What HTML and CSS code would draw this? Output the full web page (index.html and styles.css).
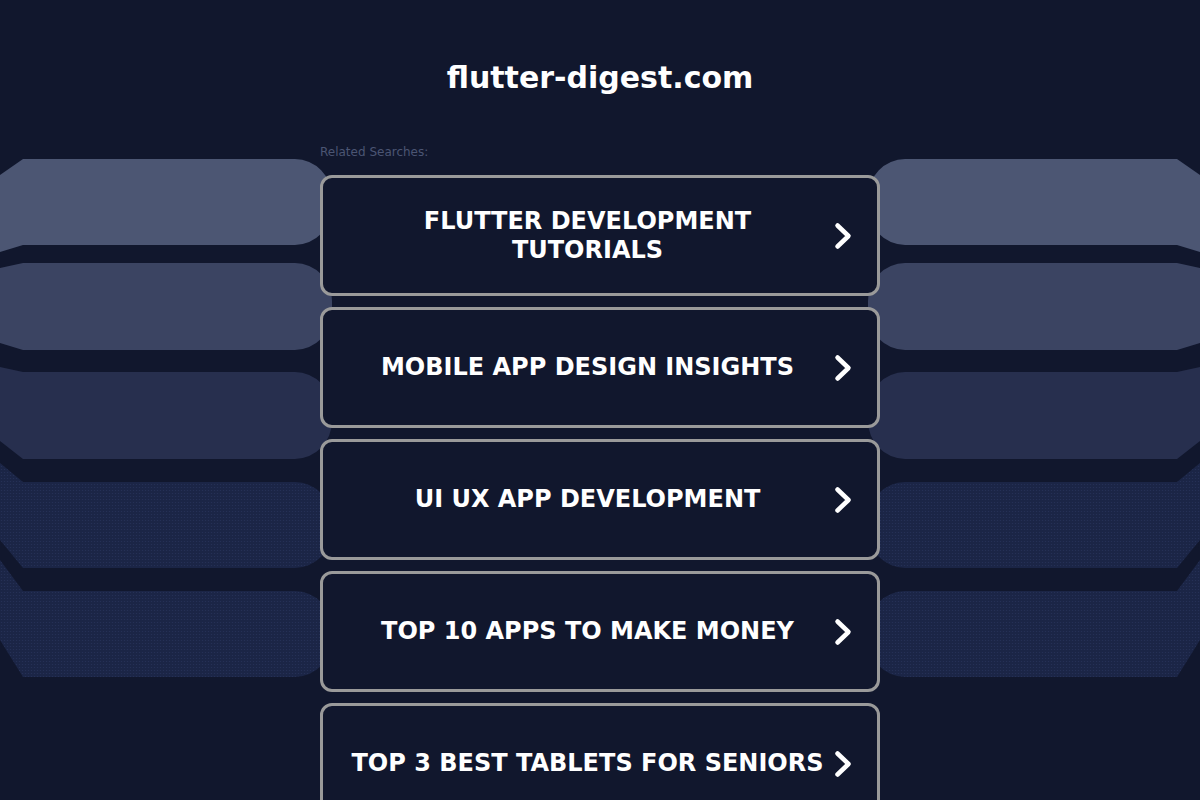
FILE: index.html
```html
<!DOCTYPE html>
<html lang="en">
<head>
<meta charset="utf-8">
<title>flutter-digest.com</title>
<link rel="stylesheet" href="styles.css">
</head>
<body>
<svg class="backdrop" viewBox="0 0 1200 800" preserveAspectRatio="none" aria-hidden="true">
  <defs>
    <pattern id="dots" width="3" height="3" patternUnits="userSpaceOnUse">
      <rect width="3" height="3" fill="#1b2546"/>
      <circle cx="1.5" cy="1.5" r="0.6" fill="#263158"/>
    </pattern>
    <path id="b1" d="M0,175 L23,159 L295,159 A37,38 0 0 1 332,197 L332,207 A37,38 0 0 1 295,245 L23,245 L0,252 Z"/>
    <path id="b2" d="M0,268 L23,263 L295,263 A37,38 0 0 1 332,301 L332,312 A37,38 0 0 1 295,350 L23,350 L0,343 Z"/>
    <path id="b3" d="M0,367 L23,372 L295,372 A37,38 0 0 1 332,410 L332,421 A37,38 0 0 1 295,459 L23,459 L0,441 Z"/>
    <path id="b4" d="M0,463 L23,482 L295,482 A37,38 0 0 1 332,520 L332,530 A37,38 0 0 1 295,568 L23,568 L0,540 Z"/>
    <path id="b5" d="M0,560 L23,591 L295,591 A37,38 0 0 1 332,629 L332,639 A37,38 0 0 1 295,677 L23,677 L0,640 Z"/>
    <g id="bands">
      <use href="#b1" fill="#4c5673"/>
      <use href="#b2" fill="#3b4462"/>
      <use href="#b3" fill="#272f4e"/>
      <use href="#b4" fill="url(#dots)"/>
      <use href="#b5" fill="url(#dots)"/>
    </g>
  </defs>
  <use href="#bands"/>
  <use href="#bands" transform="matrix(-1 0 0 1 1200 0)"/>
</svg>

<main class="page">
  <h1 class="domain">flutter-digest.com</h1>
  <section class="related">
    <p class="related-label">Related Searches:</p>
    <ul class="links">
      <li class="link-item"><a class="link-card" href="#"><span class="link-text">FLUTTER DEVELOPMENT TUTORIALS</span><svg class="chevron" viewBox="0 0 18 28"><path d="M3.5 3.5 L14.5 14 L3.5 24.5"/></svg></a></li>
      <li class="link-item"><a class="link-card" href="#"><span class="link-text">MOBILE APP DESIGN INSIGHTS</span><svg class="chevron" viewBox="0 0 18 28"><path d="M3.5 3.5 L14.5 14 L3.5 24.5"/></svg></a></li>
      <li class="link-item"><a class="link-card" href="#"><span class="link-text">UI UX APP DEVELOPMENT</span><svg class="chevron" viewBox="0 0 18 28"><path d="M3.5 3.5 L14.5 14 L3.5 24.5"/></svg></a></li>
      <li class="link-item"><a class="link-card" href="#"><span class="link-text">TOP 10 APPS TO MAKE MONEY</span><svg class="chevron" viewBox="0 0 18 28"><path d="M3.5 3.5 L14.5 14 L3.5 24.5"/></svg></a></li>
      <li class="link-item"><a class="link-card" href="#"><span class="link-text">TOP 3 BEST TABLETS FOR SENIORS</span><svg class="chevron" viewBox="0 0 18 28"><path d="M3.5 3.5 L14.5 14 L3.5 24.5"/></svg></a></li>
    </ul>
  </section>
</main>
</body>
</html>
```

FILE: styles.css
```css
html, body {
  margin: 0;
  padding: 0;
  height: 100%;
  overflow: hidden;
}

body {
  background: #11172d;
  font-family: "DejaVu Sans", Verdana, sans-serif;
  color: #ffffff;
  position: relative;
}

.backdrop {
  position: absolute;
  top: 0;
  left: 0;
  width: 1200px;
  height: 800px;
  z-index: 0;
}

.page {
  position: relative;
  z-index: 1;
  width: 560px;
  margin: 0 auto;
  padding-top: 59px;
}

.domain {
  margin: 0;
  font-size: 30px;
  line-height: 38px;
  font-weight: bold;
  text-align: center;
  color: #ffffff;
}

.related {
  margin-top: 48px;
}

.related-label {
  margin: 0 0 16px 0;
  font-size: 12px;
  line-height: 14px;
  color: #4b5573;
}

.links {
  list-style: none;
  margin: 0;
  padding: 0;
  display: flex;
  flex-direction: column;
  gap: 11px;
}

.link-card {
  display: flex;
  align-items: center;
  box-sizing: border-box;
  height: 121px;
  padding: 0 25px 0 26px;
  border: 3px solid #9a9a9a;
  border-radius: 12px;
  background: #11172d;
  color: #ffffff;
  text-decoration: none;
}

.link-text {
  flex: 1;
  text-align: center;
  font-size: 24px;
  line-height: 29px;
  font-weight: bold;
}

.chevron {
  flex: none;
  width: 18px;
  height: 28px;
  margin-left: 8px;
}

.chevron path {
  fill: none;
  stroke: #ffffff;
  stroke-width: 4.5;
  stroke-linecap: round;
  stroke-linejoin: round;
}
```
